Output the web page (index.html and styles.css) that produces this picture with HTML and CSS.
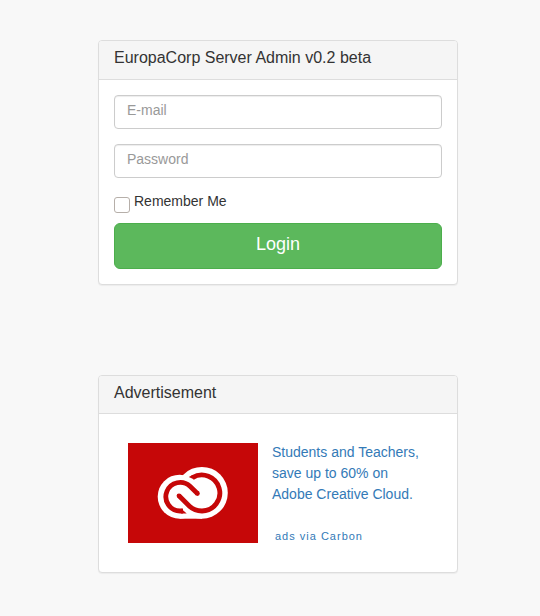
FILE: index.html
```
<!DOCTYPE html>
<html lang="en">
<head>
<meta charset="utf-8">
<meta name="viewport" content="width=device-width, initial-scale=1">
<title>EuropaCorp Server Admin</title>
<link rel="stylesheet" href="styles.css">
</head>
<body>
<main class="page">
  <section class="panel">
    <h1 class="panel-title">EuropaCorp Server Admin v0.2 beta</h1>
    <form class="login">
      <input class="field" type="email" placeholder="E-mail" aria-label="E-mail">
      <input class="field" type="password" placeholder="Password" aria-label="Password">
      <label class="remember"><input class="tick" type="checkbox"><span>Remember Me</span></label>
      <button class="submit" type="submit">Login</button>
    </form>
  </section>
  <section class="panel">
    <h2 class="panel-title panel-title-compact">Advertisement</h2>
    <div class="ad">
      <a class="ad-image" href="#" aria-label="Adobe Creative Cloud">
        <svg width="130" height="100" viewBox="0 0 130 100" aria-hidden="true">
          <rect width="130" height="100" fill="#c60708"/>
          <g fill="#fff">
            <circle cx="73.9" cy="49.8" r="25.9"/>
            <circle cx="51.7" cy="53.7" r="22"/>
            <path d="M51.7 55H74V75.7H51.7z"/>
          </g>
          <g fill="none" stroke="#c60708" stroke-width="4.8">
            <path d="M55 68H52A14.3 14.3 0 1 1 62 43.3L69.4 50.5"/>
            <path d="M64.5 34.6A18 18 0 1 1 74 68Q66.5 68 61.5 63.2L51 52.8"/>
          </g>
          <g fill="#c60708">
            <circle cx="69.4" cy="50.5" r="2.4"/>
            <circle cx="51" cy="52.8" r="2.4"/>
            <path d="M53 65.6L58.7 70.4H53z"/>
            <path d="M60.8 34L64 32.2L66.2 36.6z"/>
          </g>
        </svg>
      </a>
      <div class="ad-copy">
        <a class="ad-text" href="#">Students and Teachers, save up to 60% on Adobe Creative Cloud.</a>
        <a class="ad-source" href="#">ads via Carbon</a>
      </div>
    </div>
  </section>
</main>
</body>
</html>
```
FILE: styles.css
```
* {
  box-sizing: border-box;
}

body {
  margin: 0;
  background: #f8f8f8;
  color: #333;
  font-family: "Liberation Sans", Arial, sans-serif;
  font-size: 14px;
  line-height: 20px;
}

a {
  color: #337ab7;
  text-decoration: none;
}

.page {
  display: grid;
  grid-template-columns: minmax(0, 360px);
  justify-content: center;
  gap: 90px;
  padding: 40px 0 40px 16px;
}

.panel {
  background: #fff;
  border: 1px solid #ddd;
  border-radius: 4px;
  box-shadow: 0 1px 1px rgba(0, 0, 0, 0.05);
}

.panel-title {
  margin: 0;
  padding: 8px 15px 12px;
  background: #f5f5f5;
  border-bottom: 1px solid #ddd;
  border-radius: 3px 3px 0 0;
  font-size: 16px;
  font-weight: 400;
  line-height: 18px;
}

.panel-title-compact {
  padding-bottom: 11px;
}

.login {
  display: flex;
  flex-direction: column;
  padding: 15px;
}

.field {
  width: 100%;
  height: 34px;
  margin: 0 0 15px;
  padding: 4px 12px 8px;
  background: #fff;
  border: 1px solid #ccc;
  border-radius: 4px;
  box-shadow: inset 0 1px 1px rgba(0, 0, 0, 0.075);
  color: #555;
  font: inherit;
}

.field::placeholder {
  color: #999;
  opacity: 1;
}

.remember {
  display: flex;
  align-items: flex-start;
  gap: 4px;
  height: 30px;
  line-height: 16px;
}

.tick {
  appearance: none;
  width: 16px;
  height: 16px;
  margin: 4px 0 0;
  background: #fff;
  border: 1px solid #b6afa9;
  border-radius: 3px;
}

.tick:checked {
  background: #5cb85c;
}

.submit {
  height: 46px;
  padding: 7px 16px 11px;
  background: #5cb85c;
  border: 1px solid #4cae4c;
  border-radius: 6px;
  color: #fff;
  font: inherit;
  font-size: 18px;
  line-height: 24px;
}

.ad {
  display: flex;
  gap: 14px;
  padding: 29px;
}

.ad-image {
  flex: none;
}

.ad-image svg {
  display: block;
}

.ad-copy {
  display: flex;
  flex: 1;
  flex-direction: column;
  gap: 23px;
  margin: -1px 0;
}

.ad-text {
  line-height: 21px;
}

.ad-source {
  padding-left: 3px;
  font-size: 11px;
  letter-spacing: 1px;
  line-height: 16px;
}
```
